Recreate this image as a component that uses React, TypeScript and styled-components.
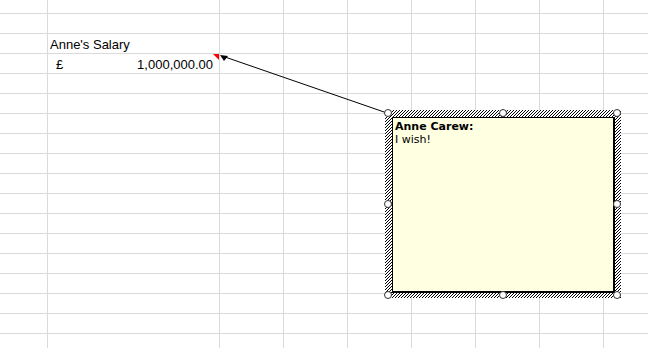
import React from "react";
import styled, { createGlobalStyle } from "styled-components";

const GlobalStyle = createGlobalStyle`
  html, body {
    margin: 0;
    padding: 0;
    background: #ffffff;
    overflow: hidden;
  }
  body {
    font-family: "Liberation Sans", Arial, sans-serif;
  }
`;

const COLS = [48, 172, 64, 64, 64, 64, 64, 64, 64, 64];
const ROWS = [14, ...Array(18).fill(20)];

type CellData = { text?: string; align?: "left" | "right"; note?: boolean; pound?: boolean };

// row-col -> content
const CONTENT: Record<string, CellData> = {
  "2-1": { text: "Anne's Salary" },
  "3-1": { text: "1,000,000.00", align: "right", note: true, pound: true },
};

const Sheet = styled.div`
  position: relative;
  width: 648px;
  height: 348px;
  overflow: hidden;
`;

const Grid = styled.div`
  display: grid;
  grid-template-columns: ${COLS.map((c) => `${c}px`).join(" ")};
  grid-template-rows: ${ROWS.map((r) => `${r}px`).join(" ")};
`;

const Cell = styled.div<{ $align?: "left" | "right" }>`
  position: relative;
  box-sizing: border-box;
  border-right: 1px solid #dadada;
  border-bottom: 1px solid #dadada;
  display: flex;
  align-items: flex-end;
  justify-content: ${(p) => (p.$align === "right" ? "flex-end" : "flex-start")};
  padding: 0 6px 1px 2px;
  font-size: 13px;
  line-height: 15px;
  color: #000;
  white-space: nowrap;
`;

const Pound = styled.span`
  position: absolute;
  left: 8px;
  bottom: 1px;
`;

const NoteMark = styled.div`
  position: absolute;
  top: 0;
  right: 0;
  width: 0;
  height: 0;
  border-top: 6px solid #ff0000;
  border-left: 6px solid transparent;
`;

const Connector = styled.svg`
  position: absolute;
  left: 0;
  top: 0;
  pointer-events: none;
`;

const CommentFrame = styled.div`
  position: absolute;
  left: 385px;
  top: 110px;
  width: 236px;
  height: 188px;
  box-sizing: border-box;
  padding: 7px 6px 5px 7px;
  background: #fff;
  display: flex;
`;

const Hatch = styled.svg`
  position: absolute;
  inset: 0;
  width: 100%;
  height: 100%;
`;

const Note = styled.div`
  position: relative;
  flex: 1;
  box-sizing: border-box;
  background: #ffffe1;
  border: 1px solid #000;
  border-right-width: 2px;
  border-bottom-width: 2px;
  padding: 2px 2px;
  font-family: "DejaVu Sans", Tahoma, sans-serif;
  font-size: 11px;
  line-height: 13px;
  color: #000;
`;

const Author = styled.div`
  font-weight: bold;
`;

const Handle = styled.div<{ $x: string; $y: string }>`
  position: absolute;
  left: ${(p) => p.$x};
  top: ${(p) => p.$y};
  width: 8px;
  height: 8px;
  margin: -4px 0 0 -4px;
  border-radius: 50%;
  border: 1px solid #333;
  background: #fff;
  box-sizing: border-box;
`;

const HANDLES: [string, string][] = [
  ["3px", "3px"],
  ["118px", "3px"],
  ["232px", "3px"],
  ["3px", "94px"],
  ["232px", "94px"],
  ["3px", "185px"],
  ["118px", "185px"],
  ["232px", "185px"],
];

export default function App() {
  return (
    <>
      <GlobalStyle />
      <Sheet>
        <Grid>
          {ROWS.map((_, r) =>
            COLS.map((_, c) => {
              const d = CONTENT[`${r}-${c}`];
              return (
                <Cell key={`${r}-${c}`} $align={d?.align}>
                  {d?.pound && <Pound>£</Pound>}
                  {d?.text}
                  {d?.note && <NoteMark />}
                </Cell>
              );
            })
          )}
        </Grid>
        <Connector width="648" height="348">
          <line x1="387" y1="113" x2="225" y2="57" stroke="#000" strokeWidth="1" />
          <polygon points="220,55 228,56 224,61" fill="#000" />
        </Connector>
        <CommentFrame>
          <Hatch shapeRendering="crispEdges">
            <defs>
              <pattern id="hatch" width="3" height="3" patternUnits="userSpaceOnUse">
                <rect x="2" y="0" width="1" height="1" fill="#000" />
                <rect x="1" y="1" width="1" height="1" fill="#000" />
                <rect x="0" y="2" width="1" height="1" fill="#000" />
              </pattern>
            </defs>
            <rect width="100%" height="100%" fill="url(#hatch)" />
          </Hatch>
          <Note>
            <Author>Anne Carew:</Author>
            <div>I wish!</div>
          </Note>
          {HANDLES.map(([x, y], i) => (
            <Handle key={i} $x={x} $y={y} />
          ))}
        </CommentFrame>
      </Sheet>
    </>
  );
}
